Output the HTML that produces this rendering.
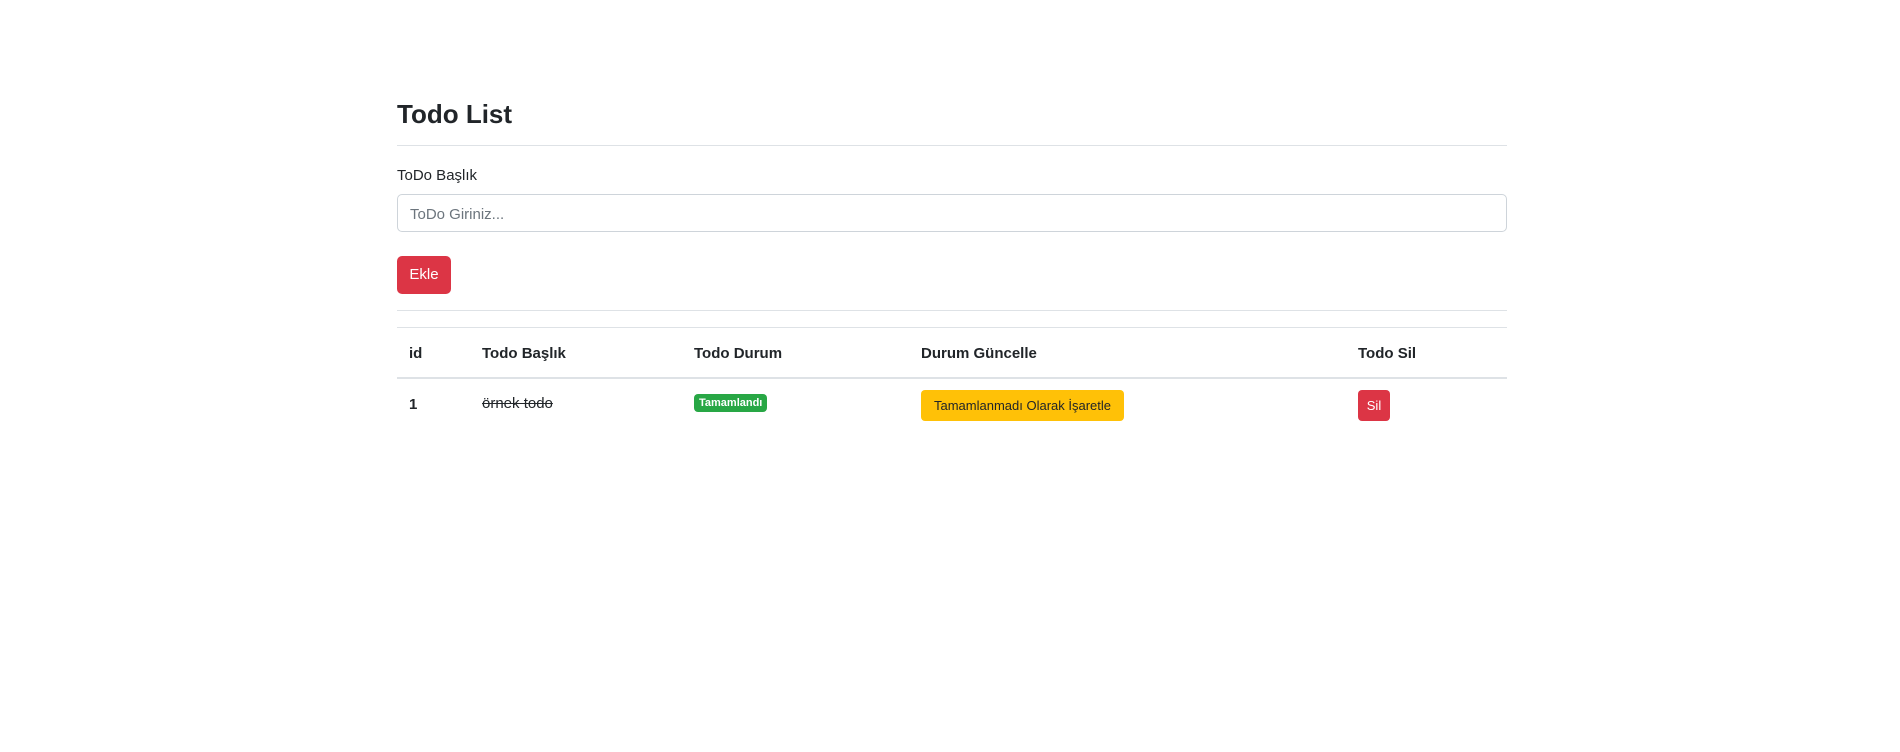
<!DOCTYPE html>
<html><head><meta charset="utf-8"><style>
body{margin:0;background:#fff;font-family:"Liberation Sans",sans-serif;color:#212529;}
.a{position:absolute;white-space:nowrap;}
.hr{position:absolute;left:397px;width:1110px;height:1px;background:#dee2e6;}
</style></head><body>
<div class="a" style="left:397px;top:98px;font-size:26px;font-weight:bold;line-height:32px;">Todo List</div>
<div class="hr" style="top:145px;"></div>
<div class="a" style="left:397px;top:166px;font-size:15px;line-height:20px;">ToDo Başlık</div>
<div class="a" style="left:397px;top:194px;width:1108px;height:36px;border:1px solid #ced4da;border-radius:5px;"></div>
<div class="a" style="left:410px;top:205px;font-size:15px;color:#6c757d;line-height:20px;">ToDo Giriniz...</div>
<div class="a" style="left:397px;top:256px;width:54px;height:38px;background:#dc3545;border-radius:5px;color:#fff;font-size:15px;line-height:38px;text-align:center;">Ekle</div>
<div class="hr" style="top:310px;"></div>
<div class="hr" style="top:327px;"></div>
<div class="hr" style="top:377px;height:2px;"></div>
<div class="a" style="left:409px;top:344px;font-size:15px;font-weight:bold;line-height:20px;">id</div>
<div class="a" style="left:482px;top:344px;font-size:15px;font-weight:bold;line-height:20px;">Todo Başlık</div>
<div class="a" style="left:694px;top:344px;font-size:15px;font-weight:bold;line-height:20px;">Todo Durum</div>
<div class="a" style="left:921px;top:344px;font-size:15px;font-weight:bold;line-height:20px;">Durum Güncelle</div>
<div class="a" style="left:1358px;top:344px;font-size:15px;font-weight:bold;line-height:20px;">Todo Sil</div>
<div class="a" style="left:409px;top:395px;font-size:15px;font-weight:bold;line-height:20px;">1</div>
<div class="a" style="left:482px;top:394px;font-size:15px;line-height:20px;text-decoration:line-through;">örnek todo</div>
<div class="a" style="left:694px;top:394px;height:18px;padding:0 5px;background:#28a745;border-radius:4px;color:#fff;font-size:11px;font-weight:bold;line-height:18px;">Tamamlandı</div>
<div class="a" style="left:921px;top:390px;width:203px;height:31px;background:#ffc107;border-radius:4px;color:#212529;font-size:13px;line-height:31px;text-align:center;">Tamamlanmadı Olarak İşaretle</div>
<div class="a" style="left:1358px;top:390px;width:32px;height:31px;background:#dc3545;border-radius:4px;color:#fff;font-size:13px;line-height:31px;text-align:center;">Sil</div>
</body></html>
